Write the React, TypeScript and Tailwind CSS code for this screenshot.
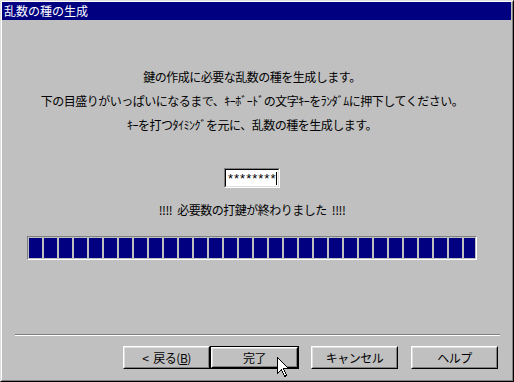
import React from 'react';

const jp = "font-['Noto_Sans_CJK_JP','Noto_Sans_CJK_SC',sans-serif]";

/** Win98 style push button; `isDefault` adds the black frame */
function Btn({ children, isDefault = false, w = 'w-[87px]' }: { children: React.ReactNode; isDefault?: boolean; w?: string }) {
  const face = (
    <div className="h-full w-full border border-t-white border-l-white border-b-black border-r-black">
      <div className="h-full w-full border border-t-[#dfdfdf] border-l-[#dfdfdf] border-b-[#808080] border-r-[#808080] flex items-center justify-center text-[12px] text-black tracking-[-0.5px]">
        {children}
      </div>
    </div>
  );
  if (isDefault) {
    return <div className={`${w} h-[23px] border border-black`}>{face}</div>;
  }
  return <div className={`${w} h-[23px]`}>{face}</div>;
}

export default function App() {
  const blocks = Array.from({ length: 30 });

  return (
    <div className={`relative w-[514px] h-[382px] bg-[#c0c0c0] border border-t-[#dfdfdf] border-l-[#dfdfdf] border-b-black border-r-black ${jp}`}>
      <div className="h-full w-full border border-t-white border-l-white border-b-[#808080] border-r-[#808080] flex flex-col">
        {/* Title bar */}
        <div className="h-[18px] mr-[1px] bg-[#000080] text-white text-[12px] leading-[18px] pl-[2px]">
          乱数の種の生成
        </div>

        {/* Body */}
        <div className="flex-1 flex flex-col items-center pr-[10px]">
          <div className="mt-[45px] text-[12px] leading-[24px] text-black text-center tracking-[-0.5px]">
            <p>鍵の作成に必要な乱数の種を生成します。</p>
            <p>下の目盛りがいっぱいになるまで、ｷｰﾎﾞｰﾄﾞの文字ｷｰをﾗﾝﾀﾞﾑに押下してください。</p>
            <p>ｷｰを打つﾀｲﾐﾝｸﾞを元に、乱数の種を生成します。</p>
          </div>

          {/* Key entry field */}
          <div className="mt-[31px] w-[56px] h-[20px] border border-t-[#808080] border-l-[#808080] border-b-white border-r-white">
            <div className="h-full w-full border border-t-black border-l-black border-b-[#dfdfdf] border-r-[#dfdfdf] bg-white flex items-center pl-[2px]">
              <span className="font-['Liberation_Sans',sans-serif] text-[13px] leading-none tracking-[1px] text-black">********</span>
              <span className="w-[1px] h-[13px] bg-black" />
            </div>
          </div>

          <p className="mt-[10px] flex text-[12px] leading-[24px] text-black tracking-[-0.5px]">
            <span>!!!!</span>
            <span className="ml-[5px]">必要数の打鍵が終わりました</span>
            <span className="ml-[5px]">!!!!</span>
          </p>

          {/* Progress bar */}
          <div className="mt-[14px] w-[450px] h-[24px] border border-t-[#808080] border-l-[#808080] border-b-white border-r-white p-[1px] overflow-hidden">
            <div className="flex gap-[2px] h-full overflow-hidden">
              {blocks.map((_, i) => (
                <div key={i} className="w-[13px] shrink-0 h-full bg-[#000080]" />
              ))}
            </div>
          </div>
        </div>

        {/* Separator */}
        <div className="ml-[13px] mr-[12px] h-[2px] border-t border-t-[#808080] border-b border-b-white" />

        {/* Buttons */}
        <div className="h-[44px] flex items-start pt-[10px] pl-[121px]">
          <Btn>
            <span>&lt;</span>
            <span className="ml-[5px]">戻る(<span className="underline">B</span>)</span>
          </Btn>
          <Btn isDefault w="w-[89px]">完了</Btn>
          <div className="w-[12px]" />
          <Btn>キャンセル</Btn>
          <div className="w-[13px]" />
          <Btn>ヘルプ</Btn>
        </div>
      </div>

      {/* Mouse pointer */}
      <svg className="absolute left-[276px] top-[356px]" width="13" height="22" viewBox="0 0 13 22">
        <path
          d="M0.5 0.5 L0.5 16.5 L4.5 12.5 L7.5 19.5 L9.5 18.5 L6.5 11.5 L11.5 11.5 Z"
          fill="white"
          stroke="black"
          strokeWidth="1"
          shapeRendering="crispEdges"
        />
      </svg>
    </div>
  );
}
